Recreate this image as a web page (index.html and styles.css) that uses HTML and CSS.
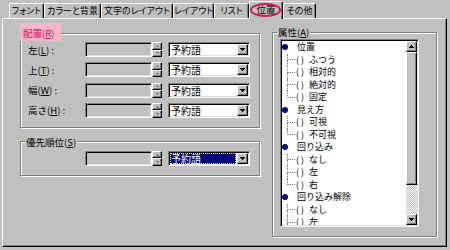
FILE: index.html
```html
<!DOCTYPE html>
<html lang="ja">
<head>
<meta charset="utf-8">
<title>位置</title>
<link rel="stylesheet" href="styles.css">
</head>
<body>
<div class="screen">
  <div class="tabs">
    <div class="tab t1">フォント</div>
    <div class="tab t2">カラーと背景</div>
    <div class="tab t3">文字のレイアウト</div>
    <div class="tab t4">レイアウト</div>
    <div class="tab t5">リスト</div>
    <div class="tab t6 active">位置<span class="ring"></span></div>
    <div class="tab t7">その他</div>
  </div>
  <div class="panel">
    <div class="col-left">
      <fieldset class="group g-place">
        <legend class="hl">配置(<u>R</u>)</legend>
        <div class="rows">
          <div class="row">
            <span class="lbl">左(<u>L</u>) :</span>
            <span class="field"></span>
            <span class="spin"><span class="sb raised"><svg width="3" height="2" viewBox="0 0 3 2"><path d="M1 0h1v1h1v1H0V1h1z" fill="#808080"/></svg></span><span class="sb raised"><svg width="3" height="2" viewBox="0 0 3 2"><path d="M0 0h3v1H2v1H1V1H0z" fill="#808080"/></svg></span></span>
            <span class="combo sunken"><span class="val">予約語</span><span class="dd raised"><svg width="5" height="3" viewBox="0 0 5 3"><path d="M0 0h5v1H4v1H3v1H2V2H1V1H0z" fill="#000"/></svg></span></span>
          </div>
          <div class="row">
            <span class="lbl">上(<u>T</u>) :</span>
            <span class="field"></span>
            <span class="spin"><span class="sb raised"><svg width="3" height="2" viewBox="0 0 3 2"><path d="M1 0h1v1h1v1H0V1h1z" fill="#808080"/></svg></span><span class="sb raised"><svg width="3" height="2" viewBox="0 0 3 2"><path d="M0 0h3v1H2v1H1V1H0z" fill="#808080"/></svg></span></span>
            <span class="combo sunken"><span class="val">予約語</span><span class="dd raised"><svg width="5" height="3" viewBox="0 0 5 3"><path d="M0 0h5v1H4v1H3v1H2V2H1V1H0z" fill="#000"/></svg></span></span>
          </div>
          <div class="row">
            <span class="lbl">幅(<u>W</u>) :</span>
            <span class="field"></span>
            <span class="spin"><span class="sb raised"><svg width="3" height="2" viewBox="0 0 3 2"><path d="M1 0h1v1h1v1H0V1h1z" fill="#808080"/></svg></span><span class="sb raised"><svg width="3" height="2" viewBox="0 0 3 2"><path d="M0 0h3v1H2v1H1V1H0z" fill="#808080"/></svg></span></span>
            <span class="combo sunken"><span class="val">予約語</span><span class="dd raised"><svg width="5" height="3" viewBox="0 0 5 3"><path d="M0 0h5v1H4v1H3v1H2V2H1V1H0z" fill="#000"/></svg></span></span>
          </div>
          <div class="row">
            <span class="lbl">高さ(<u>H</u>) :</span>
            <span class="field"></span>
            <span class="spin"><span class="sb raised"><svg width="3" height="2" viewBox="0 0 3 2"><path d="M1 0h1v1h1v1H0V1h1z" fill="#808080"/></svg></span><span class="sb raised"><svg width="3" height="2" viewBox="0 0 3 2"><path d="M0 0h3v1H2v1H1V1H0z" fill="#808080"/></svg></span></span>
            <span class="combo sunken"><span class="val">予約語</span><span class="dd raised"><svg width="5" height="3" viewBox="0 0 5 3"><path d="M0 0h5v1H4v1H3v1H2V2H1V1H0z" fill="#000"/></svg></span></span>
          </div>
        </div>
      </fieldset>
      <fieldset class="group g-prio">
        <legend>優先順位(<u>S</u>)</legend>
        <div class="rows">
          <div class="row">
            <span class="lbl"></span>
            <span class="field"></span>
            <span class="spin"><span class="sb raised"><svg width="3" height="2" viewBox="0 0 3 2"><path d="M1 0h1v1h1v1H0V1h1z" fill="#808080"/></svg></span><span class="sb raised"><svg width="3" height="2" viewBox="0 0 3 2"><path d="M0 0h3v1H2v1H1V1H0z" fill="#808080"/></svg></span></span>
            <span class="combo sunken focus"><span class="val">予約語</span><span class="dd raised"><svg width="5" height="3" viewBox="0 0 5 3"><path d="M0 0h5v1H4v1H3v1H2V2H1V1H0z" fill="#000"/></svg></span></span>
          </div>
        </div>
      </fieldset>
    </div>
    <fieldset class="group g-attr">
      <legend>属性(<u>A</u>)</legend>
      <div class="attr-body">
        <div class="list sunken">
          <div class="tree">
            <div class="ti"><span class="dot"></span>位置</div>
            <div class="ti"><span class="conn"><span class="ct"></span><span class="cb"></span></span><span class="par">()</span><span class="tx">ふつう</span></div>
            <div class="ti"><span class="conn"><span class="ct"></span><span class="cb"></span></span><span class="par">()</span><span class="tx">相対的</span></div>
            <div class="ti"><span class="conn"><span class="ct"></span><span class="cb"></span></span><span class="par">()</span><span class="tx">絶対的</span></div>
            <div class="ti last"><span class="conn"><span class="ct"></span><span class="cb"></span></span><span class="par">()</span><span class="tx">固定</span></div>
            <div class="ti"><span class="dot"></span>見え方</div>
            <div class="ti"><span class="conn"><span class="ct"></span><span class="cb"></span></span><span class="par">()</span><span class="tx">可視</span></div>
            <div class="ti last"><span class="conn"><span class="ct"></span><span class="cb"></span></span><span class="par">()</span><span class="tx">不可視</span></div>
            <div class="ti"><span class="dot"></span>回り込み</div>
            <div class="ti"><span class="conn"><span class="ct"></span><span class="cb"></span></span><span class="par">()</span><span class="tx">なし</span></div>
            <div class="ti"><span class="conn"><span class="ct"></span><span class="cb"></span></span><span class="par">()</span><span class="tx">左</span></div>
            <div class="ti last"><span class="conn"><span class="ct"></span><span class="cb"></span></span><span class="par">()</span><span class="tx">右</span></div>
            <div class="ti"><span class="dot"></span>回り込み解除</div>
            <div class="ti"><span class="conn"><span class="ct"></span><span class="cb"></span></span><span class="par">()</span><span class="tx">なし</span></div>
            <div class="ti"><span class="conn"><span class="ct"></span><span class="cb"></span></span><span class="par">()</span><span class="tx">左</span></div>
          </div>
          <div class="sbar">
            <span class="sbtn raised"><svg width="5" height="3" viewBox="0 0 5 3"><path d="M2 0h1v1h1v1h1v1H0V2h1V1h1z" fill="#000"/></svg></span>
            <span class="thumb raised"></span>
            <span class="track"></span>
            <span class="sbtn raised"><svg width="5" height="3" viewBox="0 0 5 3"><path d="M0 0h5v1H4v1H3v1H2V2H1V1H0z" fill="#000"/></svg></span>
          </div>
        </div>
      </div>
    </fieldset>
  </div>
</div>
</body>
</html>
```

FILE: styles.css
```css
* { box-sizing: border-box; }
html, body { margin: 0; padding: 0; }
body {
  width: 450px;
  height: 250px;
  overflow: hidden;
  background: #c0c0c0;
  font-family: "Noto Sans CJK JP", "Noto Sans", sans-serif;
  font-size: 9px;
  color: #000;
}
u { text-decoration: underline; text-underline-offset: 1px; }

.screen {
  height: 250px;
  padding: 1px 3px 3px 2px;
  display: flex;
  flex-direction: column;
}

/* tabs */
.tabs {
  flex: none;
  display: flex;
  align-items: flex-end;
  height: 17px;
  padding-left: 7px;
  position: relative;
  z-index: 1;
}
.tab {
  height: 15px;
  border-top: 1px solid #fff;
  border-left: 1px solid #fff;
  border-right: 1px solid #000;
  box-shadow: inset -1px 0 0 #808080;
  border-radius: 2px 2px 0 0;
  background: #c0c0c0;
  text-align: center;
  line-height: 13px;
  font-size: 9px;
  font-feature-settings: "palt";
  white-space: nowrap;
}
.t1 { width: 35px; }
.t2 { width: 57px; }
.t3 { width: 72px; }
.t4 { width: 41px; }
.t5 { width: 35px; }
.t6 { width: 34px; }
.t7 { width: 33px; }
.tab.active {
  height: 18px;
  margin-bottom: -1px;
  line-height: 15px;
  font-size: 9.5px;
  position: relative;
}
.ring {
  position: absolute;
  left: 0;
  top: 1px;
  width: 31px;
  height: 14px;
  border: 2px solid #d4144e;
  border-radius: 50%;
}

/* panel */
.panel {
  flex: 1;
  border-top: 1px solid #fff;
  border-left: 1px solid #fff;
  border-right: 1px solid #000;
  border-bottom: 1px solid #000;
  box-shadow: inset -1px -1px 0 #808080;
  display: flex;
  align-items: flex-start;
  padding: 8px 0 0 17px;
}
.col-left {
  width: 240px;
  margin-right: 12px;
  display: flex;
  flex-direction: column;
}

/* group boxes */
.group {
  margin: 0;
  padding: 0;
  min-width: 0;
  border: 1px solid #808080;
  box-shadow: inset 1px 1px 0 #fff, 1px 1px 0 #fff;
}
.group legend {
  margin-left: 4px;
  padding: 0 1px;
  line-height: 12px;
  font-size: 9.5px;
  background: #c0c0c0;
}
.group legend.hl {
  margin-left: 1px;
  padding: 0 5px 0 1px;
  color: #dc1060;
  background: #f5b6ca;
  box-shadow: 0 0 0 2px #f5b6ca, 0 -2px 0 2px #f5b6ca;
}
.g-place { width: 240px; }
.g-prio { width: 240px; margin-top: 8px; }
.g-attr { width: 165px; margin-top: -1px; }

.rows {
  padding: 3px 9px 9px 7px;
  display: flex;
  flex-direction: column;
  gap: 5.3px;
}
.row {
  display: flex;
  align-items: center;
  height: 15px;
}
.lbl {
  width: 57px;
  flex: none;
  font-size: 9.5px;
  line-height: 12px;
  white-space: nowrap;
}

.raised {
  background: #c0c0c0;
  border: 1px solid;
  border-color: #fff #000 #000 #fff;
  box-shadow: inset -1px -1px 0 #808080;
}
.sunken {
  border: 1px solid;
  border-color: #808080 #fff #fff #808080;
  box-shadow: inset 1px 1px 0 #000, inset -1px -1px 0 #dfdfdf;
  padding: 1px;
}

.field {
  width: 67px;
  height: 15px;
  flex: none;
  border: 1px solid;
  border-color: #808080 #fff #fff #808080;
  box-shadow: inset 1px 1px 0 #000, inset -1px -1px 0 #dfdfdf;
  background: #c0c0c0;
}
.spin {
  width: 10px;
  height: 15px;
  flex: none;
  display: flex;
  flex-direction: column;
}
.spin .sb {
  flex: 1;
  display: flex;
  align-items: center;
  justify-content: center;
}
.spin svg, .dd svg, .sbtn svg { display: block; }

.combo {
  margin-left: 6px;
  width: 82px;
  height: 15px;
  flex: none;
  background: #fff;
  display: flex;
}
.combo .val {
  flex: 1;
  line-height: 11px;
  padding-left: 1px;
  font-size: 10px;
  white-space: nowrap;
}
.combo .dd {
  width: 11px;
  flex: none;
  display: flex;
  align-items: center;
  justify-content: center;
}
.combo.focus .val {
  background: #000080;
  color: #fff;
  outline: 1px dotted #ffff60;
  outline-offset: -1px;
  margin-right: 1px;
}

/* attribute tree */
.attr-body {
  padding: 1px 17px 9px 7px;
}
.list {
  width: 139px;
  height: 188px;
  background: #fff;
  display: flex;
}
.tree {
  flex: 1;
  overflow: hidden;
}
.ti {
  height: 12.5px;
  display: flex;
  align-items: center;
  white-space: nowrap;
  line-height: 12px;
  font-size: 9px;
}
.dot {
  width: 6px;
  height: 6px;
  flex: none;
  border-radius: 50%;
  background: #000080;
  margin-right: 9px;
}
.conn {
  margin-left: 5px;
  width: 8px;
  flex: none;
  align-self: stretch;
  display: flex;
  flex-direction: column;
}
.ct {
  height: 6.5px;
  border-left: 1px dotted #808080;
  border-bottom: 1px dotted #808080;
}
.cb {
  flex: 1;
  border-left: 1px dotted #808080;
}
.last .cb { border-left: none; }
.par {
  margin-left: 1px;
  width: 10px;
  flex: none;
  letter-spacing: 2px;
}
.tx { margin-left: 3px; }

.sbar {
  width: 11px;
  flex: none;
  display: flex;
  flex-direction: column;
}
.sbtn {
  height: 11px;
  flex: none;
  display: flex;
  align-items: center;
  justify-content: center;
}
.thumb {
  height: 133px;
  flex: none;
}
.track {
  flex: 1;
  background: repeating-conic-gradient(#fff 0 25%, #c0c0c0 0 50%) 0 0 / 2px 2px;
}
```
